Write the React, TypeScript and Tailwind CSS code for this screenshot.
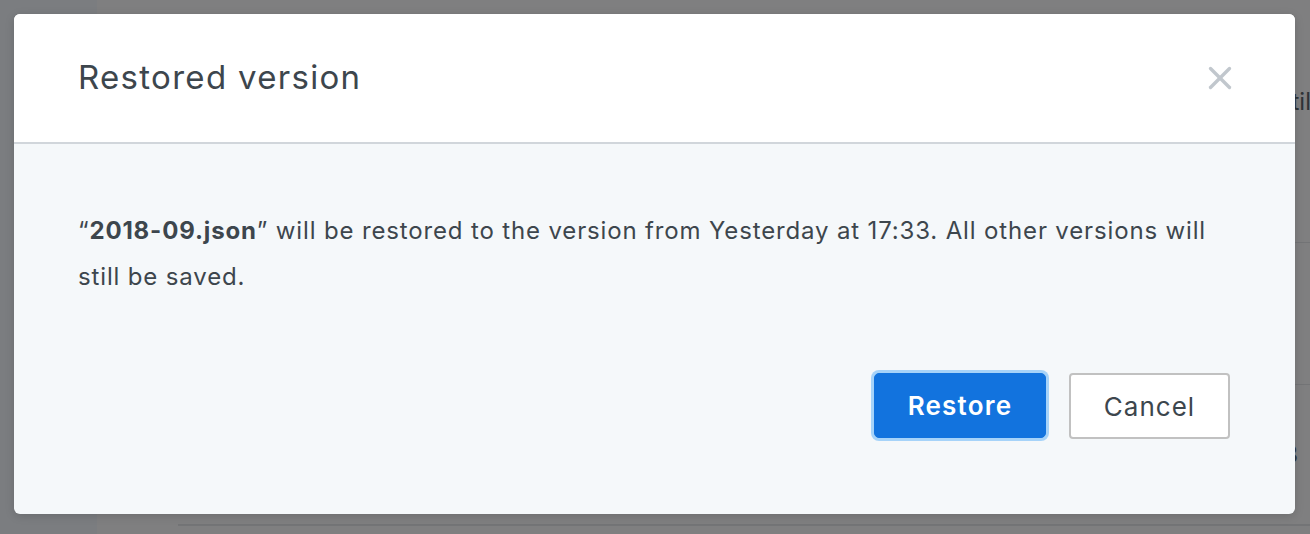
import { X } from "lucide-react";

const font = { fontFamily: "Inter, 'Liberation Sans', sans-serif" };

function Backdrop() {
  return (
    <div className="flex h-[534px] w-[1310px]">
      <div className="w-[97px] bg-[#7b7d80]" />
      <div className="flex flex-1 flex-col bg-[#7f7f80] pl-[81px]">
        <div className="flex h-[243px] items-start justify-end border-b border-[#737476] pt-[84px]">
          <span className="mr-[-1px] text-[24px] text-[#2f3236]">until</span>
        </div>
        <div className="h-[142px] border-b border-[#737476]" />
        <div className="flex h-[141px] items-start justify-end border-b-2 border-[#737476] pt-[52px]">
          <span className="mr-[12px] text-[24px] text-[#2f3236]">3</span>
        </div>
      </div>
    </div>
  );
}

function RestoreDialog() {
  return (
    <div className="absolute left-[14px] top-[14px] flex h-[500px] w-[1281px] flex-col overflow-hidden rounded-[6px] bg-[#f5f8fa] shadow-[0_2px_10px_rgba(0,0,0,0.15)]">
      <div className="flex h-[130px] items-center justify-between border-b-2 border-[#d1d6db] bg-white pl-[64px] pr-[56px]">
        <h1 className="text-[33px] font-normal tracking-[1.3px] text-[#3d464d]">Restored version</h1>
        <button className="text-[#c1c7cd]">
          <X size={38} strokeWidth={2.1} />
        </button>
      </div>
      <div className="flex flex-1 flex-col px-[64px] pb-[75px] pt-[64px]">
        <p className="text-[24px] leading-[46px] tracking-[0.85px] text-[#3d464d]">
          “<span className="font-bold">2018-09.json</span>” will be restored to the version from
          Yesterday at 17:33. All other versions will still be saved.
        </p>
        <div className="mt-auto flex justify-end gap-[23px] pr-[1px]">
          <button className="h-[65px] w-[172px] rounded-[5px] border border-[#1273de] bg-[#1273de] text-[26px] font-semibold tracking-[1.2px] text-white ring-[3px] ring-[#a6d3f9]">
            Restore
          </button>
          <button className="h-[66px] w-[161px] rounded-[4px] border-2 border-[#c1c1c1] bg-white text-[26px] tracking-[1px] text-[#3d464d]">
            Cancel
          </button>
        </div>
      </div>
    </div>
  );
}

export default function App() {
  return (
    <div className="relative h-[534px] w-[1310px] overflow-hidden" style={font}>
      <Backdrop />
      <RestoreDialog />
    </div>
  );
}
